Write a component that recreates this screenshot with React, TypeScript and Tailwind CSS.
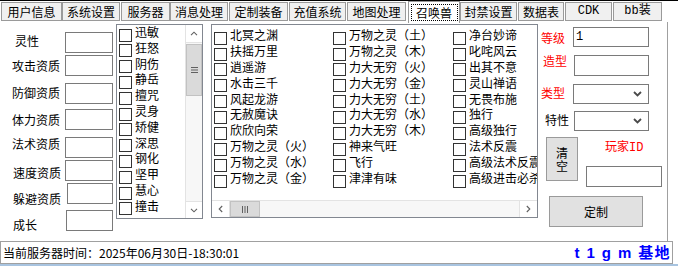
import React from "react";

const skills = ["迅敏", "狂怒", "阴伤", "静岳", "擅咒", "灵身", "矫健", "深思", "钢化", "坚甲", "慧心", "撞击"];
const col1 = ["北冥之渊", "扶摇万里", "逍遥游", "水击三千", "风起龙游", "无赦魔诀", "欣欣向荣", "万物之灵（火）", "万物之灵（水）", "万物之灵（金）"];
const col2 = ["万物之灵（土）", "万物之灵（木）", "力大无穷（火）", "力大无穷（金）", "力大无穷（土）", "力大无穷（水）", "力大无穷（木）", "神来气旺", "飞行", "津津有味"];
const col3 = ["净台妙谛", "叱咤风云", "出其不意", "灵山禅语", "无畏布施", "独行", "高级独行", "法术反震", "高级法术反震", "高级进击必杀"];

const tabs: { t: string; c: string; mono?: boolean; sel?: boolean }[] = [
  { t: "用户信息", c: "ml-[1px] w-[61px]" },
  { t: "系统设置", c: "ml-[0px] w-[58px]" },
  { t: "服务器", c: "ml-[1px] w-[49px]" },
  { t: "消息处理", c: "ml-[0px] w-[58px]" },
  { t: "定制装备", c: "ml-[1px] w-[59px]" },
  { t: "充值系统", c: "ml-[1px] w-[57px]" },
  { t: "地图处理", c: "ml-[1px] w-[59px]" },
  { t: "召唤兽", c: "ml-[2px] w-[52px]", sel: true },
  { t: "封禁设置", c: "ml-[0px] w-[57px]" },
  { t: "数据表", c: "ml-[1px] w-[46px]" },
  { t: "CDK", c: "ml-[1px] w-[47px]", mono: true },
  { t: "bb装", c: "ml-[1px] w-[49px]", mono: true },
];

function Box() {
  return <span className="mt-[3.7px] h-[13px] w-[13px] shrink-0 border border-[#333333] bg-white" />;
}

function Item({ label, big }: { label: string; big?: boolean }) {
  return (
    <div className={big ? "flex h-[15.9px] items-start whitespace-nowrap" : "flex h-[15.8px] items-start whitespace-nowrap"}>
      <Box />
      <span className="ml-[3px] leading-[13px]">{label}</span>
    </div>
  );
}

function Chevron() {
  return (
    <svg width="9" height="6" viewBox="0 0 9 6">
      <path d="M1 1l3.5 3.5L8 1" stroke="#4a4a4a" strokeWidth="1.8" fill="none" />
    </svg>
  );
}

function Select() {
  return (
    <div className="flex h-full w-full items-center justify-end border border-[#7a7a7a] bg-white pr-[6px]">
      <Chevron />
    </div>
  );
}

export default function App() {
  return (
    <div className="relative h-[266px] w-[678px] overflow-hidden bg-white text-[12px] text-black font-['Noto_Sans_CJK_SC',sans-serif]">
      <div className="h-[1px] bg-[#000000]" />
      {/* Tabs */}
      <div className="flex h-[21px] items-start">
        {tabs.map((tb) =>
          tb.sel ? (
            <div
              key={tb.t}
              className={`${tb.c} relative z-10 flex h-[22px] items-center justify-center border border-b-0 border-[#9a9a9a] bg-white`}
            >
              <span className="flex h-[17px] w-[47px] items-center justify-center border border-dotted border-[#000000] leading-[15px]">
                {tb.t}
              </span>
            </div>
          ) : (
            <div
              key={tb.t}
              className={`${tb.c} mt-[1px] flex h-[19px] items-center justify-center border border-[#9a9a9a] bg-[#f0f0f0] leading-[17px]`}
            >
              {tb.mono ? <span className="font-['Liberation_Mono','Noto_Sans_CJK_SC',monospace]">{tb.t}</span> : tb.t}
            </div>
          )
        )}
      </div>

      {/* Content */}
      <div className="flex h-[219px] w-[668px] border-r border-[#a0a0a0]">
        {/* Labels */}
        <div className="flex w-[65px] flex-col pl-[12px] leading-[16px]">
          <span className="ml-[3px] mt-[11px]">灵性</span>
          <span className="mt-[9px]">攻击资质</span>
          <span className="mt-[11px]">防御资质</span>
          <span className="mt-[11px]">体力资质</span>
          <span className="mt-[8px]">法术资质</span>
          <span className="ml-[1px] mt-[13px]">速度资质</span>
          <span className="ml-[1px] mt-[10px]">躲避资质</span>
          <span className="ml-[1px] mt-[10px]">成长</span>
        </div>
        {/* Inputs */}
        <div className="flex w-[48px] flex-col">
          <div className="mt-[10px] h-[21px] border border-[#7a7a7a] bg-white" />
          <div className="mt-[2px] h-[21px] border border-[#7a7a7a] bg-white" />
          <div className="mt-[7px] h-[21px] border border-[#7a7a7a] bg-white" />
          <div className="mt-[5px] h-[21px] border border-[#7a7a7a] bg-white" />
          <div className="mt-[7px] h-[21px] border border-[#7a7a7a] bg-white" />
          <div className="mt-[2px] h-[21px] border border-[#7a7a7a] bg-white" />
          <div className="ml-[2px] mt-[2px] h-[21px] border border-[#7a7a7a] bg-white" />
          <div className="ml-[1px] mt-[6px] h-[21px] border border-[#7a7a7a] bg-white" />
        </div>

        {/* Skill list with vertical scrollbar */}
        <div className="ml-[3px] mt-[2px] flex h-[195px] w-[87px] border border-[#828790] bg-white">
          <div className="flex-1 pl-[2px]">
            {skills.map((s) => (
              <Item key={s} label={s} />
            ))}
          </div>
          <div className="flex w-[17px] flex-col border-l border-[#e3e3e3] bg-[#f7f7f7]">
            <div className="flex h-[18px] items-center justify-center border-b border-[#e3e3e3] bg-white">
              <svg width="8" height="5" viewBox="0 0 8 5">
                <path d="M1 4.2L4 1.2L7 4.2" stroke="#606060" strokeWidth="1.1" fill="none" />
              </svg>
            </div>
            <div className="mt-[1px] flex h-[52px] items-center justify-center border border-[#c2c2c2] bg-[#dadada]">
              <svg width="7" height="6" viewBox="0 0 7 6">
                <path d="M0 0.5H7M0 3H7M0 5.5H7" stroke="#606060" strokeWidth="1" />
              </svg>
            </div>
            <div className="flex-1" />
            <div className="flex h-[17px] items-center justify-center border-t border-[#e3e3e3] bg-white">
              <svg width="8" height="5" viewBox="0 0 8 5">
                <path d="M1 0.8L4 3.8L7 0.8" stroke="#606060" strokeWidth="1.1" fill="none" />
              </svg>
            </div>
          </div>
        </div>

        {/* Big checked list */}
        <div className="ml-[8px] mt-[2px] flex h-[194px] w-[327px] flex-col border border-[#828790] bg-white">
          <div className="flex flex-1 overflow-hidden pl-[2px] pt-[3px]">
            <div className="w-[119px] shrink-0">
              {col1.map((s) => (
                <Item key={s} label={s} big />
              ))}
            </div>
            <div className="w-[120px] shrink-0">
              {col2.map((s) => (
                <Item key={s} label={s} big />
              ))}
            </div>
            <div className="w-[120px] shrink-0">
              {col3.map((s) => (
                <Item key={s} label={s} big />
              ))}
            </div>
          </div>
          <div className="flex h-[17px] border-t border-[#e3e3e3] bg-[#f7f7f7]">
            <div className="flex w-[18px] items-center justify-center border-r border-[#e3e3e3] bg-white">
              <svg width="5" height="8" viewBox="0 0 5 8">
                <path d="M4.2 1L1.2 4L4.2 7" stroke="#606060" strokeWidth="1.1" fill="none" />
              </svg>
            </div>
            <div className="flex w-[30px] items-center justify-center border border-[#c2c2c2] bg-[#dadada]">
              <svg width="6" height="7" viewBox="0 0 6 7">
                <path d="M0.5 0V7M3 0V7M5.5 0V7" stroke="#606060" strokeWidth="1" />
              </svg>
            </div>
            <div className="flex-1" />
            <div className="flex w-[18px] items-center justify-center border-l border-[#e3e3e3] bg-white">
              <svg width="5" height="8" viewBox="0 0 5 8">
                <path d="M0.8 1L3.8 4L0.8 7" stroke="#606060" strokeWidth="1.1" fill="none" />
              </svg>
            </div>
          </div>
        </div>

        {/* Right side */}
        <div className="ml-[3px] flex flex-1 flex-col">
          <div className="mt-[5px] flex items-start">
            <span className="mt-[3px] w-[32px] leading-[16px] text-[#ff0000]">等级</span>
            <div className="flex h-[20px] w-[76px] items-center border border-[#7a7a7a] bg-white pl-[2px] font-['Liberation_Mono',monospace] text-[12px]">
              1
            </div>
          </div>
          <div className="mt-[6px] flex items-start">
            <span className="ml-[2px] w-[30px] leading-[16px] text-[#ff0000]">造型</span>
            <div className="ml-[1px] mt-[2px] h-[21px] w-[75px] border border-[#7a7a7a] bg-white" />
          </div>
          <div className="mt-[8px] flex items-start">
            <span className="mt-[1px] w-[32px] leading-[16px] text-[#ff0000]">类型</span>
            <div className="h-[20px] w-[76px]">
              <Select />
            </div>
          </div>
          <div className="mt-[7px] flex items-start">
            <span className="ml-[4px] mt-[1px] w-[29px] leading-[16px]">特性</span>
            <div className="h-[20px] w-[75px]">
              <Select />
            </div>
          </div>
          <div className="mt-[6px] flex items-start">
            <div className="ml-[5px] flex h-[44px] w-[32px] items-center justify-center border border-[#9a9a9a] bg-[#e1e1e1]">
              <span className="w-[12px] break-all text-[12px] leading-[13px]">清空</span>
            </div>
            <div className="ml-[8px] flex flex-col">
              <span className="ml-[19px] mt-[1px] leading-[16px] text-[#ff0000]">
                玩家<span className="font-['Liberation_Mono',monospace]">ID</span>
              </span>
              <div className="mt-[10px] h-[21px] w-[76px] border border-[#7a7a7a] bg-white" />
            </div>
          </div>
          <div className="ml-[8px] mt-[9px] flex h-[31px] w-[94px] items-center justify-center border border-[#9a9a9a] bg-[#e1e1e1] text-[12px]">
            定制
          </div>
        </div>
      </div>

      {/* Status bar */}
      <div className="flex h-[23px] w-[673px] items-center justify-between border border-[#a0a0a0] pl-[2px] pr-[1px]">
        <span className="leading-[16px]">当前服务器时间：2025年06月30日-18:30:01</span>
        <span className="font-['Liberation_Sans','Noto_Sans_CJK_SC',sans-serif] text-[15px] font-bold leading-[18px] tracking-[1.4px] text-[#0000ff]">
          t 1 g m 基地
        </span>
      </div>
      <div className="h-[2px] bg-[#a8c4e0]" />
    </div>
  );
}
